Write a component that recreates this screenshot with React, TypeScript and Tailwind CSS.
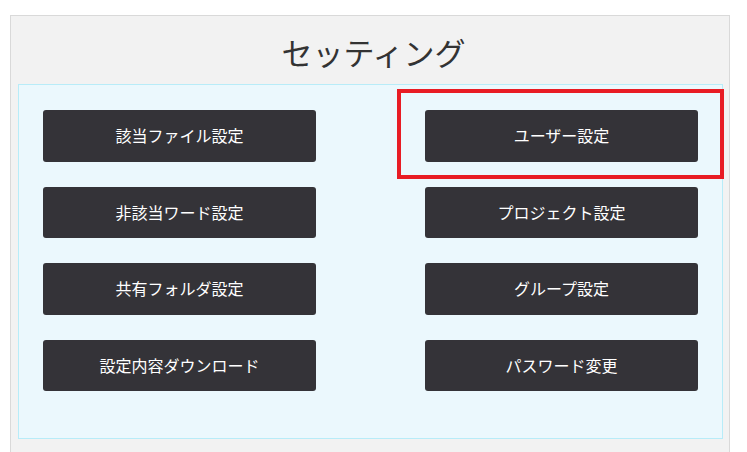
import React from 'react';

const items = [
  '該当ファイル設定',
  'ユーザー設定',
  '非該当ワード設定',
  'プロジェクト設定',
  '共有フォルダ設定',
  'グループ設定',
  '設定内容ダウンロード',
  'パスワード変更',
];

export default function App() {
  return (
    <div
      className="relative h-[452px] w-[747px] overflow-hidden bg-white pl-[10px] pt-[15px]"
      style={{ fontFamily: '"Meiryo", "Noto Sans CJK JP", sans-serif' }}
    >
      {/* Settings panel */}
      <div className="h-[460px] w-[720px] border border-[#d9d9d9] bg-[#f2f2f2] pl-[7px]">
        <h1 className="flex h-[68px] items-center justify-center pt-[4px] text-[31px] font-normal text-[#333333]">
          セッティング
        </h1>
        <div className="h-[355px] w-[705px] border border-[#b8ecf8] bg-[#ebf8fd] px-[24px] pt-[25px]">
          <div className="grid grid-cols-[273px_273px] justify-between gap-y-[25px]">
            {items.map((label) => (
              <button
                key={label}
                className="flex h-[51.5px] items-center justify-center rounded-[3px] bg-[#343338] pb-[1px] text-[16px] text-white"
              >
                {label}
              </button>
            ))}
          </div>
        </div>
      </div>

      {/* Highlight annotation */}
      <div className="pointer-events-none absolute left-[397px] top-[89px] h-[90px] w-[327px] border-[4px] border-[#e81c24]" />
    </div>
  );
}
